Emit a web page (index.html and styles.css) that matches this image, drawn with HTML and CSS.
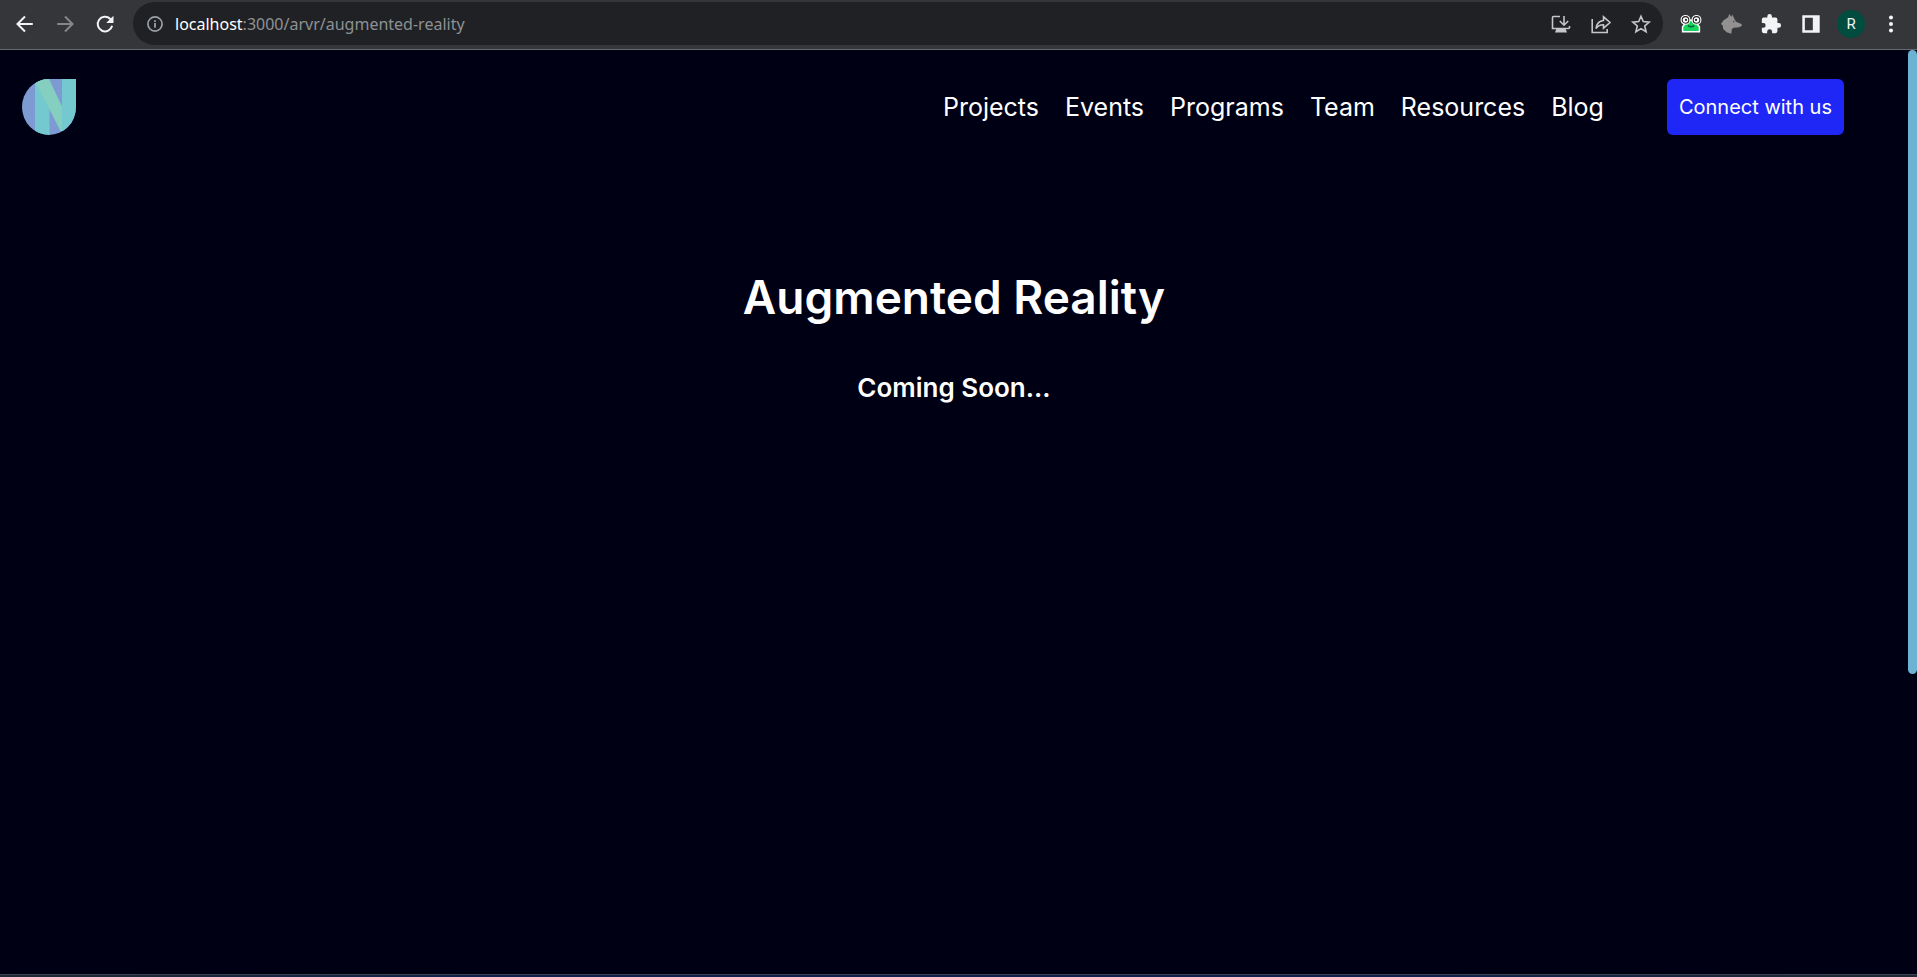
FILE: index.html
```html
<!DOCTYPE html>
<html lang="en">
<head>
<meta charset="utf-8">
<title>Augmented Reality</title>
<link rel="stylesheet" href="styles.css">
</head>
<body>
<div class="browser">
  <div class="toolbar">
    <button class="tool" aria-label="Back"><svg viewBox="0 0 24 24"><path d="M20.500 12H4.500M12 3.800 3.800 12l8.200 8.200" class="line"/></svg></button>
    <button class="tool dim" aria-label="Forward"><svg viewBox="0 0 24 24"><path d="M3.500 12h16M12 3.800l8.200 8.200-8.200 8.200" class="line"/></svg></button>
    <button class="tool" aria-label="Reload"><svg viewBox="0 0 24 24"><path d="M19.800 14a8 8 0 1 1-2.200-7.700L20 9" class="line"/><path d="M21.300 3V11h-8z"/></svg></button>
    <div class="omnibox">
      <button class="info" aria-label="Site information"><svg viewBox="0 0 16 16"><circle cx="8" cy="8" r="7.100" class="ring"/><path d="M7.100 7h1.800v4.800H7.100zM7.100 4.200h1.800V6H7.100z"/></svg></button>
      <a class="url" href="#"><span class="host">localhost</span>:3000/arvr/augmented-reality</a>
      <button class="action" aria-label="Install"><svg viewBox="0 0 22 22"><path d="M10 3.500H3.500a1 1 0 0 0-1 1v11h16a1 1 0 0 0 1-1V13" class="thin"/><path d="M6.500 15.500h9l1.500 4H5z"/><path d="M14 3v8.500M9.800 8l4.200 4.200L18.200 8" class="thin"/></svg></button>
      <button class="action" aria-label="Share"><svg viewBox="0 0 22 22"><path d="M2.200 6v13.500h15V16" class="thin"/><path d="M6 15.500c.6-5 3-7.500 7.500-8V3.800l6.500 5.700-6.500 5.700v-3.500c-3.300 0-5.700 1-7.500 3.800z" class="thin"/></svg></button>
      <button class="action" aria-label="Bookmark"><svg viewBox="0 0 22 22"><path d="M11 3.200l2.300 5.400 5.900.5-4.500 3.900 1.400 5.700-5.100-3.100-5.100 3.100L7.300 13 2.800 9.100l5.900-.5z" class="thin"/></svg></button>
    </div>
    <div class="extensions">
      <button class="tool" aria-label="Frog extension"><svg viewBox="0 0 24 24"><path d="M4.500 8h15v5l1.700 2v5.500H2.800V15l1.700-2z" fill="#16d45c" stroke="#fff" stroke-width="1.600"/><circle cx="6" cy="7.500" r="4.800" fill="#222" stroke="#fff" stroke-width="1.200"/><circle cx="18" cy="7.500" r="4.800" fill="#222" stroke="#fff" stroke-width="1.200"/><circle cx="6" cy="7.500" r="3" fill="#fff"/><circle cx="18" cy="7.500" r="3" fill="#fff"/><circle cx="6.500" cy="7.500" r="1.200" fill="#222"/><circle cx="17.500" cy="7.500" r="1.200" fill="#222"/><path d="M8.500 13.500q3.500 3 7 0" fill="none" stroke="#063" stroke-width="1.500"/></svg></button>
      <button class="tool gray" aria-label="Wolf extension"><svg viewBox="0 0 24 24"><path d="M1 12l3-4 5-3.500L10 1l2.500 3L13.500 1.500 16 7l1.500 2.500 6 2.500.3 1.800-2.800 1.700-6 .5-2 1.500-.7 5-5-1.500-3.800-3.500-.5-4z"/><path d="M14.300 8.500l2 1.300-2 .2z" fill="#35363a"/></svg></button>
      <button class="tool" aria-label="Extensions"><svg viewBox="0 0 24 24"><path d="M20.500 11H19V7a2 2 0 0 0-2-2h-4V3.500a2.500 2.500 0 0 0-5 0V5H4a2 2 0 0 0-2 2v3.800h1.500a2.700 2.700 0 0 1 0 5.400H2V20a2 2 0 0 0 2 2h3.800v-1.500a2.700 2.700 0 0 1 5.400 0V22H17a2 2 0 0 0 2-2v-4h1.500a2.500 2.500 0 0 0 0-5z"/></svg></button>
      <button class="tool" aria-label="Side panel"><svg viewBox="0 0 24 24"><path fill-rule="evenodd" d="M2.500 2.500h19v19h-19zm2.800 2.800v13.400h8.700V5.300z"/></svg></button>
      <button class="avatar" aria-label="Profile R">R</button>
      <button class="tool" aria-label="Menu"><svg viewBox="0 0 24 24"><circle cx="12" cy="5" r="2.200"/><circle cx="12" cy="12" r="2.200"/><circle cx="12" cy="19" r="2.200"/></svg></button>
    </div>
  </div>
  <div class="page">
    <div class="content">
      <header class="site-header">
        <a href="#" class="logo" aria-label="Home"><svg viewBox="0 0 54 56" preserveAspectRatio="none"><defs><clipPath id="drop"><path d="M27 0h27v28A27 28 0 0 1 0 28 27 28 0 0 1 27 0z"/></clipPath></defs><g clip-path="url(#drop)"><path fill="#7d9bd2" d="M0 0h54v56H0z"/><path fill="#73c9cf" d="M13 0h14.500v56H13zM40 0h14v56H40z"/><path fill="#84cfc0" d="M13 0h14l13 27.500V52h-1.500L13 2z"/></g></svg></a>
        <nav class="nav">
          <a href="#">Projects</a><a href="#">Events</a><a href="#">Programs</a><a href="#">Team</a><a href="#">Resources</a><a href="#">Blog</a>
        </nav>
        <button class="connect">Connect with us</button>
      </header>
      <main class="hero">
        <h1>Augmented Reality</h1>
        <h2>Coming Soon...</h2>
      </main>
    </div>
    <div class="track"><div class="thumb"></div></div>
  </div>
  <div class="edge"></div>
</div>
</body>
</html>
```
FILE: styles.css
```css
* { box-sizing: border-box; }
body { margin: 0; background: #000014; color: #fff; font-family: Inter, "Open Sans", sans-serif; }
a { color: inherit; text-decoration: none; }
button { padding: 0; border: 0; background: none; color: inherit; font: inherit; cursor: pointer; }
svg { display: block; width: 100%; height: 100%; fill: currentColor; }
h1, h2 { margin: 0; font-weight: 600; }
.line { fill: none; stroke: currentColor; stroke-width: 2.2; }
.thin { fill: none; stroke: currentColor; stroke-width: 1.6; }
.ring { fill: none; stroke: currentColor; stroke-width: 1.7; }
.browser { display: flex; flex-direction: column; min-height: 100vh; }
.toolbar { display: flex; align-items: center; gap: 18px; padding: 2px 15px 4px 14px; background: #35363a; border-bottom: 1px solid #68696c; color: #f1f3f4; }
.tool { flex: none; width: 22px; height: 22px; }
.dim { color: #85868a; }
.gray { color: #92918f; }
.omnibox { flex: 1; display: flex; align-items: center; gap: 18px; height: 43px; margin: 0 -1px; padding: 0 11px 0 14px; border-radius: 22px; background: #202124; color: #c4c6c9; }
.info { width: 16px; height: 16px; color: #9aa0a6; }
.url { flex: 1; margin-left: -6px; font: 16px/24px "Noto Sans", sans-serif; color: #8d9196; }
.host { color: #fff; }
.action { width: 22px; height: 22px; }
.extensions { display: flex; align-items: center; gap: 18px; }
.avatar { width: 28px; height: 28px; margin: 0 -3px; border-radius: 50%; background: #004d40; font: 15px/28px Roboto, sans-serif; }
.page { flex: 1; display: flex; }
.content { flex: 1; }
.site-header { display: flex; align-items: center; padding: 29px 64px 0 22px; }
.logo { width: 54px; height: 56px; }
.nav { display: flex; gap: 26px; margin: 0 63px 0 auto; font-size: 25px; line-height: 32px; }
.connect { padding: 0 12px; height: 56px; border-radius: 6px; background: #1e27f5; font-size: 20px; }
.hero { display: flex; flex-direction: column; align-items: center; gap: 44px; padding-top: 132px; }
h1 { font-size: 46px; line-height: 60px; }
h2 { font-size: 26px; line-height: 34px; }
.track { width: 9px; }
.thumb { height: 67.5%; border-radius: 5px; background: #6cb2d3; }
.edge { height: 3px; border-top: 1px solid #3d424b; background: linear-gradient(90deg, #1f2937, #10204a 25%, #10204a 75%, #1f2937); }
```
